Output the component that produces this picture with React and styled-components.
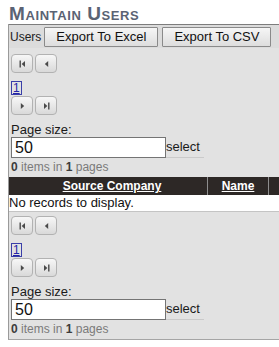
import React from "react";
import styled, { createGlobalStyle } from "styled-components";

const GlobalStyle = createGlobalStyle`
  html, body {
    margin: 0;
    padding: 0;
    background: #fff;
    overflow: hidden;
  }
  body {
    font-family: "Liberation Sans", Arial, sans-serif;
    color: #111;
  }
`;

const Page = styled.div`
  width: 279px;
  height: 347px;
  overflow: hidden;
  background: #fff;
`;

const Title = styled.h1`
  margin: 0;
  padding: 4px 0 0 9px;
  height: 20px;
  font-size: 19px;
  line-height: 20px;
  font-weight: bold;
  font-variant: small-caps;
  letter-spacing: 0.6px;
  color: #5a6374;
  white-space: nowrap;
`;

const Grid = styled.div`
  margin-left: 8px;
  width: 300px;
  background: #e2e2e2;
  border-left: 1px solid #9a9a9a;
  border-bottom: 1px solid #a5a5a5;
`;

const Toolbar = styled.div`
  display: flex;
  align-items: center;
  height: 23px;
  padding-left: 1px;
  border-top: 1px solid #7d7d7d;
  background: #dcdcdc;
`;

const ToolbarLabel = styled.span`
  font-size: 12px;
  color: #222;
  margin-right: 3px;
`;

const ToolbarButton = styled.button`
  height: 20px;
  margin-right: 4px;
  padding: 0 11px;
  font-family: inherit;
  font-size: 13px;
  color: #111;
  border: 1px solid #8a8a8a;
  border-radius: 1px;
  background: linear-gradient(#f6f6f6, #dddddd);
  white-space: nowrap;
`;

const Pager = styled.div`
  padding: ${(p) => p.$top}px 0 3px 2px;
`;

const NavRow = styled.div`
  display: flex;
  gap: 2px;
  margin-top: ${(p) => p.$gap || 0}px;
`;

const NavButton = styled.span`
  display: flex;
  align-items: center;
  justify-content: center;
  width: 20px;
  height: 17px;
  border: 1px solid #b2b2b2;
  border-radius: 4px;
  background: linear-gradient(#f7f7f7, #d9d9d9);
`;

const NumRow = styled.div`
  height: 14px;
  margin-top: 5px;
`;

const PageLink = styled.a`
  display: inline-block;
  height: 12px;
  padding: 0 1px;
  border: 1px solid #3a3fa8;
  font-size: 12px;
  line-height: 12px;
  color: #2424a8;
  text-decoration: underline;
`;

const Label = styled.div`
  margin-top: 7px;
  font-size: 13px;
  line-height: 15px;
  color: #1a1a1a;
`;

const SizeRow = styled.div`
  display: flex;
  align-items: center;
`;

const SizeInput = styled.div`
  box-sizing: border-box;
  width: 155px;
  height: 21px;
  padding-left: 3px;
  border: 1px solid #747474;
  background: #fff;
  font-size: 16px;
  line-height: 19px;
  color: #111;
`;

const SelectText = styled.span`
  display: block;
  height: 20px;
  padding-right: 4px;
  border-bottom: 1px solid #cacaca;
  font-size: 13px;
  line-height: 20px;
  color: #1a1a1a;
`;

const Info = styled.div`
  margin-top: 2px;
  font-size: 12px;
  line-height: 14px;
  color: #7a7a7a;
  b {
    color: #3c3c3c;
  }
`;

const Table = styled.table`
  width: 100%;
  border-collapse: collapse;
  table-layout: fixed;
`;

const HeadCell = styled.th`
  width: ${(p) => p.$w}px;
  height: 18px;
  padding: 0 0 0 ${(p) => p.$pad || 0}px;
  background: #2d2826;
  border-right: 1px solid #8e8e8e;
  font-size: 12px;
  font-weight: bold;
  color: #fff;
  text-align: center;
  a {
    color: #fff;
    text-decoration: underline;
  }
`;

const Cell = styled.td`
  height: 16px;
  padding: 0;
  background: #fff;
  border-bottom: 1px solid #c4c4c4;
  font-size: 13px;
  line-height: 16px;
  color: #111;
  white-space: nowrap;
`;

const Arrow = ({ dir, bar }) => (
  <svg width="7" height="8" viewBox="0 0 7 8">
    {dir === "left" ? (
      <>
        {bar && <rect x="0.5" y="0.5" width="1.4" height="7" fill="#4a4a4a" />}
        <path d={bar ? "M6 1 L2.6 4 L6 7 Z" : "M5.2 1 L1.8 4 L5.2 7 Z"} fill="#4a4a4a" />
      </>
    ) : (
      <>
        <path d={bar ? "M1 1 L4.4 4 L1 7 Z" : "M1.8 1 L5.2 4 L1.8 7 Z"} fill="#4a4a4a" />
        {bar && <rect x="5.1" y="0.5" width="1.4" height="7" fill="#4a4a4a" />}
      </>
    )}
  </svg>
);

function PagerBlock({ top }) {
  return (
    <Pager $top={top}>
      <NavRow>
        <NavButton><Arrow dir="left" bar /></NavButton>
        <NavButton><Arrow dir="left" /></NavButton>
      </NavRow>
      <NumRow>
        <PageLink href="#">1</PageLink>
      </NumRow>
      <NavRow $gap={4}>
        <NavButton><Arrow dir="right" /></NavButton>
        <NavButton><Arrow dir="right" bar /></NavButton>
      </NavRow>
      <Label>Page size:</Label>
      <SizeRow>
        <SizeInput>50</SizeInput>
        <SelectText>select</SelectText>
      </SizeRow>
      <Info>
        <b>0</b> items in <b>1</b> pages
      </Info>
    </Pager>
  );
}

export default function App() {
  return (
    <Page>
      <GlobalStyle />
      <Title>Maintain Users</Title>
      <Grid>
        <Toolbar>
          <ToolbarLabel>Users</ToolbarLabel>
          <ToolbarButton>Export To Excel</ToolbarButton>
          <ToolbarButton>Export To CSV</ToolbarButton>
        </Toolbar>
        <PagerBlock top={6} />
        <Table>
          <thead>
            <tr>
              <HeadCell $w={190} $pad={8}><a href="#">Source Company</a></HeadCell>
              <HeadCell $w={60}><a href="#">Name</a></HeadCell>
              <HeadCell $w={50} />
            </tr>
          </thead>
          <tbody>
            <tr>
              <Cell colSpan={3}>No records to display.</Cell>
            </tr>
          </tbody>
        </Table>
        <PagerBlock top={4} />
      </Grid>
    </Page>
  );
}
